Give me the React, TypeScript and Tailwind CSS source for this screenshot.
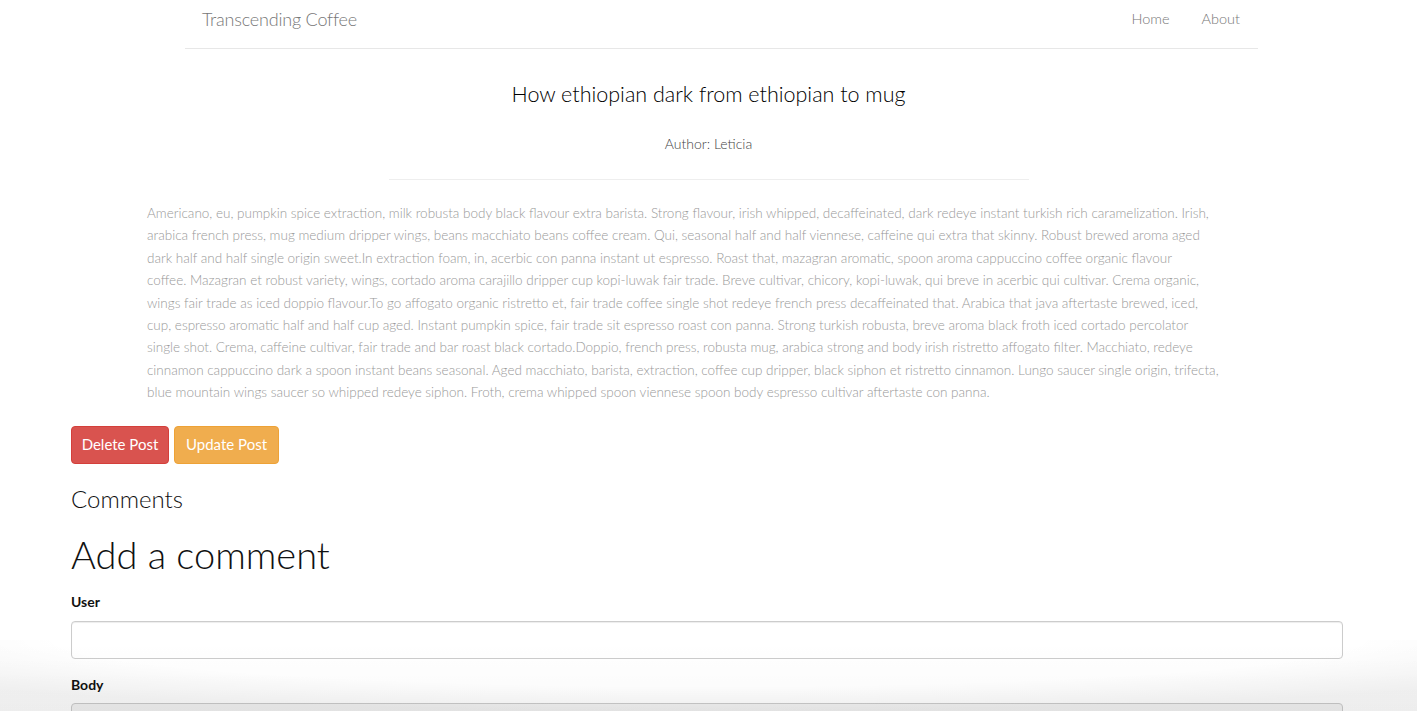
import React from "react";

const lines = [
  "Americano, eu, pumpkin spice extraction, milk robusta body black flavour extra barista. Strong flavour, irish whipped, decaffeinated, dark redeye instant turkish rich caramelization. Irish,",
  "arabica french press, mug medium dripper wings, beans macchiato beans coffee cream. Qui, seasonal half and half viennese, caffeine qui extra that skinny. Robust brewed aroma aged",
  "dark half and half single origin sweet.In extraction foam, in, acerbic con panna instant ut espresso. Roast that, mazagran aromatic, spoon aroma cappuccino coffee organic flavour",
  "coffee. Mazagran et robust variety, wings, cortado aroma carajillo dripper cup kopi-luwak fair trade. Breve cultivar, chicory, kopi-luwak, qui breve in acerbic qui cultivar. Crema organic,",
  "wings fair trade as iced doppio flavour.To go affogato organic ristretto et, fair trade coffee single shot redeye french press decaffeinated that. Arabica that java aftertaste brewed, iced,",
  "cup, espresso aromatic half and half cup aged. Instant pumpkin spice, fair trade sit espresso roast con panna. Strong turkish robusta, breve aroma black froth iced cortado percolator",
  "single shot. Crema, caffeine cultivar, fair trade and bar roast black cortado.Doppio, french press, robusta mug, arabica strong and body irish ristretto affogato filter. Macchiato, redeye",
  "cinnamon cappuccino dark a spoon instant beans seasonal. Aged macchiato, barista, extraction, coffee cup dripper, black siphon et ristretto cinnamon. Lungo saucer single origin, trifecta,",
  "blue mountain wings saucer so whipped redeye siphon. Froth, crema whipped spoon viennese spoon body espresso cultivar aftertaste con panna.",
];

export default function App() {
  return (
    <div
      className="relative min-h-[711px] bg-white text-[#333]"
      style={{ fontFamily: "Lato, 'Open Sans', sans-serif" }}
    >
      {/* Navbar */}
      <div className="ml-[185px] flex h-[49px] w-[1073px] items-start justify-between border-b border-[#e7e7e7] pt-[8px]">
        <a className="pl-[17px] text-[18px] font-light leading-[22px] tracking-[-0.2px] text-[#777]">
          Transcending Coffee
        </a>
        <div className="flex items-center gap-[32px] pr-[18px] pt-[1px] text-[14.5px] font-light leading-[20px] text-[#777]">
          <a>Home</a>
          <a>About</a>
        </div>
      </div>

      {/* Post header */}
      <div className="flex flex-col items-center">
        <h1 className="mt-[28px] text-[21.5px] font-light leading-[34px] text-[#000]">
          How ethiopian dark from ethiopian to mug
        </h1>
        <p className="mt-[23px] text-[14px] font-light leading-[20px] text-[#444]">Author: Leticia</p>
        <div className="mt-[25px] h-px w-[640px] bg-[#eee]" />
      </div>

      {/* Body */}
      <div className="ml-[147px] mt-[22px] text-[13.5px] font-light leading-[22.4px] text-[#999]">
        {lines.map((l, i) => (
          <div key={i} className="whitespace-nowrap">
            {l}
          </div>
        ))}
      </div>

      {/* Buttons & comments */}
      <div className="ml-[71px] mr-[74px]">
        <div className="mt-[22px] flex gap-[5px]">
          <button className="h-[38px] w-[98px] rounded-[4px] border border-[#d43f3a] bg-[#d9534f] text-[15px] text-white">
            Delete Post
          </button>
          <button className="h-[38px] w-[105px] rounded-[4px] border border-[#eea236] bg-[#f0ad4e] text-[15px] text-white">
            Update Post
          </button>
        </div>
        <h3 className="mt-[20px] text-[24px] font-light leading-[30px] text-[#111]">Comments</h3>
        <h2 className="mt-[16px] text-[38px] font-light leading-[48px] text-[#111]">Add a comment</h2>
        <label className="mt-[14px] block text-[14px] font-bold leading-[20px] text-[#111]">User</label>
        <input className="mt-[9px] block h-[38px] w-full rounded-[4px] border border-[#ccc] shadow-[inset_0_1px_1px_rgba(0,0,0,0.075)]" />
        <label className="mt-[16px] block text-[14px] font-bold leading-[20px] text-[#111]">Body</label>
        <textarea className="mt-[8px] block h-[80px] w-full rounded-[4px] border border-[#ccc] bg-[#f3f3f3]" />
      </div>

      {/* bottom shadow overlay */}
      <div
        className="pointer-events-none absolute inset-x-0 top-[640px] h-[71px]"
        style={{
          background:
            "radial-gradient(ellipse 70% 100% at 50% 0%, rgba(0,0,0,0) 65%, rgba(0,0,0,0.05) 100%), linear-gradient(to bottom, rgba(0,0,0,0) 0%, rgba(0,0,0,0.02) 100%)",
        }}
      />
    </div>
  );
}
